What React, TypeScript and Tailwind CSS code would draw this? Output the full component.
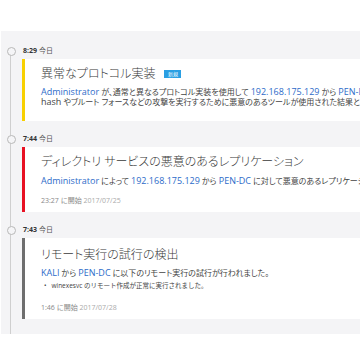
import React from 'react';

const font = { fontFamily: '"Open Sans", "Noto Sans CJK JP", sans-serif' };
const palt = { fontFeatureSettings: '"palt"' };

function TimeRow({ time }: { time: string }) {
    return (
        <div className="flex items-center h-[16px]">
            <div className="w-[9px] h-[9px] rounded-full border border-[#b8b8b8] bg-[#f5f5f7] ml-[6px] mr-[7px] z-10" />
            <span className="text-[7px] text-[#333] font-bold">{time}</span>
            <span className="text-[7px] text-[#555] ml-[2px]">今日</span>
        </div>
    );
}

const Link = ({ children }: { children: React.ReactNode }) => (
    <span className="text-[#2d6bc9] text-[9px]">{children}</span>
);

const Lat = ({ children }: { children: React.ReactNode }) => (
    <span className="text-[9px]">{children}</span>
);

export default function App() {
    return (
        <div className="w-[360px] h-[360px] bg-white overflow-hidden text-[#444]" style={font}>
            <div className="h-[31px]" />
            <div className="relative ml-px bg-[#f4f4f6] pt-[12px] pb-[15px]">
                {/* timeline */}
                <div className="absolute left-[9px] top-[20px] bottom-0 w-px bg-[#cfcfcf]" />

                <TimeRow time="8:29" />
                <div className="ml-[21px] w-[420px] bg-white border-l-[3px] border-[#f8d000] pl-[16px] pt-[5px] pb-[14px] whitespace-nowrap">
                    <div className="flex items-center h-[20px]">
                        <span className="text-[12px] text-[#3a3a3a] font-light" style={palt}>異常なプロトコル実装</span>
                        <span className="ml-[9px] w-[17px] h-[8px] bg-[#2a9fe3] text-white text-[5px] leading-[8px] text-center">新規</span>
                    </div>
                    <div className="mt-[3px] text-[8px] leading-[10px]" style={palt}>
                        <div><Link>Administrator</Link> が、通常と異なるプロトコル実装を使用して <Link>192.168.175.129</Link> から <Link>PEN-DC</Link> への認証に成功しました。これは、<Lat>Pass-the-</Lat></div>
                        <div><Lat>hash</Lat> やブルート フォースなどの攻撃を実行するために悪意のあるツールが使用された結果と考えられます。</div>
                    </div>
                </div>

                <div className="mt-[10px]">
                    <TimeRow time="7:44" />
                </div>
                <div className="ml-[21px] w-[420px] bg-white border-l-[3px] border-[#e81123] pl-[16px] pt-[5px] pb-[6px] whitespace-nowrap">
                    <div className="flex items-center h-[20px]">
                        <span className="text-[12px] text-[#3a3a3a] font-light" style={palt}>ディレクトリ サービスの悪意のあるレプリケーション</span>
                    </div>
                    <div className="mt-[4px] text-[8px] leading-[10px]" style={palt}>
                        <Link>Administrator</Link> によって <Link>192.168.175.129</Link> から <Link>PEN-DC</Link> に対して悪意のあるレプリケーション要求が行われました。
                    </div>
                    <div className="mt-[10px] text-[7px] leading-[10px]">
                        <span className="text-[#888]">23:27 に開始</span> <span className="text-[#aaa]">2017/07/25</span>
                    </div>
                </div>

                <div className="mt-[10px]">
                    <TimeRow time="7:43" />
                </div>
                <div className="ml-[21px] w-[420px] bg-white border-l-[3px] border-[#6e6e6e] pl-[16px] pt-[7px] pb-[6px] whitespace-nowrap">
                    <div className="flex items-center h-[20px]">
                        <span className="text-[12px] text-[#3a3a3a] font-light" style={palt}>リモート実行の試行の検出</span>
                    </div>
                    <div className="mt-[3px] text-[8px] leading-[10px]" style={palt}>
                        <Link>KALI</Link> から <Link>PEN-DC</Link> に以下のリモート実行の試行が行われました。
                    </div>
                    <div className="mt-[3px] text-[6.5px] leading-[10px] flex">
                        <span className="ml-[3px] mr-[5px]">•</span>
                        <span>winexesvc のリモート作成が正常に実行されました。</span>
                    </div>
                    <div className="mt-[12px] text-[7px] leading-[10px]">
                        <span className="text-[#888]">1:46 に開始</span> <span className="text-[#aaa]">2017/07/28</span>
                    </div>
                </div>
            </div>
        </div>
    );
}
